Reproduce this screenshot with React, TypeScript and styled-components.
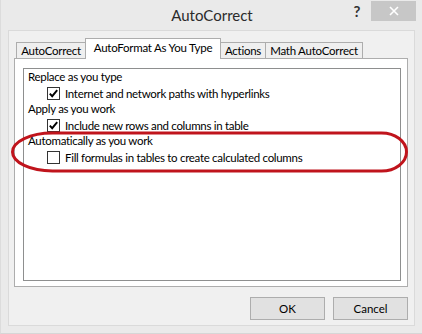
import React from "react";
import styled, { createGlobalStyle } from "styled-components";

const Global = createGlobalStyle`
  html, body { margin: 0; padding: 0; background: #eaeaea; }
  body { font-family: Lato, "Noto Sans", sans-serif; }
`;

const Window = styled.div`
  position: relative;
  width: 422px;
  height: 334px;
  box-sizing: border-box;
  background: #eaeaea;
  border-left: 1px solid #dcdcdc;
  border-bottom: 1px solid #d6d6d6;
  display: flex;
  flex-direction: column;
  font-family: Lato, "Noto Sans", sans-serif;
`;

const TitleBar = styled.div`
  height: 30px;
  flex: none;
  display: grid;
  grid-template-columns: 1fr auto 1fr;
  align-items: start;
`;

const Title = styled.div`
  grid-column: 2;
  font-size: 15px;
  line-height: 30px;
  color: #2b2b2b;
  padding-left: 1px;
`;

const Controls = styled.div`
  grid-column: 3;
  justify-self: end;
  display: flex;
  align-items: flex-start;
  gap: 8px;
  padding-right: 6px;
`;

const Help = styled.div`
  width: 12px;
  font-size: 15px;
  font-weight: 700;
  line-height: 20px;
  text-align: center;
  color: #333;
  margin-top: 1px;
`;

const Close = styled.div`
  width: 45px;
  height: 20px;
  margin-top: 1px;
  background: #c7c7c7;
  display: flex;
  align-items: center;
  justify-content: center;
`;

const Client = styled.div`
  flex: 1;
  margin: 0 7px 7px 7px;
  border: 1px solid #dadada;
  background: #f0f0f0;
  padding: 7px 6px 0 5px;
  display: flex;
  flex-direction: column;
`;

const TabStrip = styled.div`
  display: flex;
  align-items: flex-end;
  height: 21px;
  padding-left: 2px;
  margin-bottom: -1px;
  position: relative;
  z-index: 1;
`;

const Tab = styled.div<{ $w: number; $active?: boolean }>`
  box-sizing: border-box;
  width: ${(p) => p.$w}px;
  height: ${(p) => (p.$active ? 21 : 16)}px;
  margin-bottom: ${(p) => (p.$active ? 0 : 1)}px;
  margin-left: -1px;
  &:first-child { margin-left: 0; }
  border: 1px solid #adadad;
  border-bottom: none;
  background: ${(p) => (p.$active ? "#ffffff" : "#efefef")};
  position: relative;
  z-index: ${(p) => (p.$active ? 2 : 1)};
  font-size: 11.5px;
  letter-spacing: -0.25px;
  color: #000;
  line-height: ${(p) => (p.$active ? 18 : 15)}px;
  text-align: center;
  white-space: nowrap;
`;

const TabPanel = styled.div`
  box-sizing: border-box;
  height: 229px;
  border: 1px solid #adadad;
  background: #fff;
  padding: 9px 6px 5px 8px;
  display: flex;
`;

const GroupBox = styled.div`
  flex: 1;
  border: 1px solid #8e8f8f;
  padding: 0 0 0 4px;
  display: flex;
  flex-direction: column;
`;

const Heading = styled.div`
  height: 16px;
  font-size: 11.5px;
  letter-spacing: -0.3px;
  line-height: 16px;
  color: #000;
  white-space: nowrap;
`;

const CheckRow = styled.div`
  height: 16px;
  display: flex;
  align-items: center;
  gap: 5px;
  padding-left: 19px;
  font-size: 11.5px;
  letter-spacing: -0.3px;
  color: #000;
  white-space: nowrap;
`;

const Box = styled.div`
  width: 13px;
  height: 13px;
  box-sizing: border-box;
  border: 1px solid #333;
  background: #fff;
  flex: none;
  display: flex;
  align-items: center;
  justify-content: center;
`;

const ButtonRow = styled.div`
  display: flex;
  justify-content: flex-end;
  gap: 8px;
  margin-top: 10px;
`;

const Button = styled.div`
  width: 75px;
  height: 23px;
  box-sizing: border-box;
  border: 1px solid #adadad;
  background: #e1e1e1;
  font-size: 11.5px;
  line-height: 21px;
  text-align: center;
  color: #000;
`;

const Annotation = styled.svg`
  position: absolute;
  left: 0;
  top: 0;
  pointer-events: none;
`;

function Check({ checked }: { checked: boolean }) {
  return (
    <Box>
      {checked && (
        <svg width="11" height="11" viewBox="0 0 11 11">
          <path d="M1.8 5.6 L4.2 8.2 L9.2 2.2" fill="none" stroke="#000" strokeWidth="1.9" />
        </svg>
      )}
    </Box>
  );
}

export default function App() {
  return (
    <>
      <Global />
      <Window>
        <TitleBar>
          <Title>AutoCorrect</Title>
          <Controls>
            <Help>?</Help>
            <Close>
              <svg width="10" height="10" viewBox="0 0 10 10">
                <path d="M1 1 L9 9 M9 1 L1 9" stroke="#fff" strokeWidth="1.6" />
              </svg>
            </Close>
          </Controls>
        </TitleBar>
        <Client>
          <TabStrip>
            <Tab $w={70}>AutoCorrect</Tab>
            <Tab $w={136} $active>AutoFormat As You Type</Tab>
            <Tab $w={46}>Actions</Tab>
            <Tab $w={98}>Math AutoCorrect</Tab>
          </TabStrip>
          <TabPanel>
            <GroupBox>
              <Heading>Replace as you type</Heading>
              <CheckRow>
                <Check checked />
                Internet and network paths with hyperlinks
              </CheckRow>
              <Heading>Apply as you work</Heading>
              <CheckRow>
                <Check checked />
                Include new rows and columns in table
              </CheckRow>
              <Heading>Automatically as you work</Heading>
              <CheckRow>
                <Check checked={false} />
                Fill formulas in tables to create calculated columns
              </CheckRow>
            </GroupBox>
          </TabPanel>
          <ButtonRow>
            <Button>OK</Button>
            <Button>Cancel</Button>
          </ButtonRow>
        </Client>
        <Annotation width="422" height="334" viewBox="0 0 422 334">
          <path
            d="M51.5 133 H380.5 A25 19 0 0 1 405.5 152 A25 19 0 0 1 380.5 171 H51.5 A40 19 0 0 1 11.5 152 A40 19 0 0 1 51.5 133 Z"
            fill="none"
            stroke="#c0141c"
            strokeWidth="3"
          />
        </Annotation>
      </Window>
    </>
  );
}
